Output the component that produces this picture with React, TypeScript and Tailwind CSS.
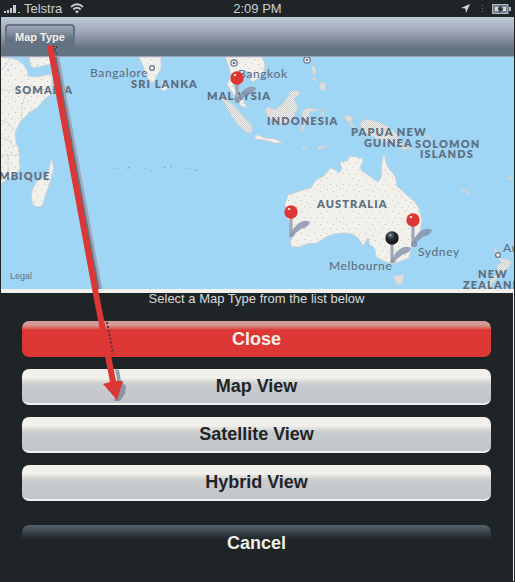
import React from "react";

const WATER = "#9fd6f5";
const LAND = "#f1f0eb";

type Label = { text: string; x: number; y: number; kind: "country" | "city" | "legal" };

const labels: Label[] = [
  { text: "SOMALIA", x: 15, y: 94, kind: "country" },
  { text: "MBIQUE", x: -1, y: 180, kind: "country" },
  { text: "SRI LANKA", x: 131, y: 88, kind: "country" },
  { text: "MALAYSIA", x: 207, y: 100, kind: "country" },
  { text: "INDONESIA", x: 267, y: 125, kind: "country" },
  { text: "PAPUA NEW", x: 351, y: 136, kind: "country" },
  { text: "GUINEA", x: 364, y: 147, kind: "country" },
  { text: "SOLOMON", x: 415, y: 148, kind: "country" },
  { text: "ISLANDS", x: 420, y: 158, kind: "country" },
  { text: "AUSTRALIA", x: 317, y: 208, kind: "country" },
  { text: "NEW", x: 478, y: 278, kind: "country" },
  { text: "ZEALAND", x: 463, y: 289, kind: "country" },
  { text: "Bangalore", x: 90, y: 77, kind: "city" },
  { text: "Bangkok", x: 238, y: 78, kind: "city" },
  { text: "Sydney", x: 418, y: 256, kind: "city" },
  { text: "Melbourne", x: 329, y: 270, kind: "city" },
  { text: "Au", x: 503, y: 252, kind: "city" },
  { text: "Legal", x: 10, y: 279, kind: "legal" },
];

const labelClass = {
  country: "fill-[#5f6f82] font-['Lato','Open_Sans',sans-serif] text-[11px] font-extrabold tracking-widest",
  city: "fill-[#5f6f82] font-['Lato','Open_Sans',sans-serif] text-[12px] font-medium tracking-wider",
  legal: "fill-[#5f6f82] font-['Liberation_Sans',Arial,sans-serif] text-[9px]",
};

const plains = [
  "M0 57L10 58L18 60L24 65L27 70L28 76L35 77L52 74L52 93L45 99L38 107L29 113L20 122L15 133L16 142L19 150L20 168L17 173L10 178L0 184Z",
  "M29 57H51V64L42 66L33 68L30 64Z",
  "M51 158L54 168L52 175L50 182L46 194L44 200L42 206L38 207L33 205L31 195L33 188L37 181L45 177L49 170Z",
  "M139 57H161V69L157 75L154 82L151 83L146 75L143 66Z",
  "M162 81L165 83L168 88L165 91L161 90Z",
  "M225 57H262L265 64L264 72L259 78L253 82L250 79L251 73L246 71L240 75L235 72L232 80L235 89L241 94L245 104L247 108L241 106L236 98L230 89L227 84L231 76L229 67Z",
  "M285 204L288 195L300 191L311 188L316 180L324 176L330 168L334 169L339 173L342 169L340 162L347 161L350 156L362 158L363 162L360 167L362 171L371 177L378 182L381 178L382 160L384 154L387 166L391 171L395 176L397 186L407 195L414 201L419 208L422 220L420 231L415 239L411 249L409 258L401 261L392 264L384 261L376 257L375 249L370 245L368 238L363 246L358 238L352 234L344 233L334 234L326 237L317 243L306 244L300 247L292 247L290 242L293 235L290 225L286 214Z",
  "M254 136L258 135L265 138L275 139L283 143L275 143L263 140L255 139Z",
];

const forests = [
  "M220 96L227 100L235 107L244 117L252 125L252 133L246 132L238 125L231 115L226 105Z",
  "M265 109L268 107L275 110L282 104L288 97L290 92L296 90L300 94L294 99L298 107L293 117L290 123L280 124L269 119Z",
  "M303 110L309 108L319 110L310 112L308 117L313 121L311 124L307 119L304 127L302 132L301 120Z",
  "M311 66L315 66L316 73L313 74ZM312 77L317 79L315 82ZM321 82L326 84L325 91L319 89Z",
  "M318 148L327 145L324 148L318 150ZM302 147L307 148L304 150ZM322 108L324 114L322 119Z",
  "M344 117L348 115L353 118L351 122L347 121L353 125L355 129L350 125ZM360 123L367 119L378 122L389 127L397 134L399 140L406 147L411 150L403 149L393 143L382 142L375 137L363 132Z",
  "M393 275L398 276L404 274L403 281L400 285L396 284Z",
  "M494 247L497 250L499 258L506 259L512 262L508 268L502 273L496 279L490 287L486 289H481L490 281L498 273L497 266L502 262L496 256Z",
  "M462 188L469 193L468 194L461 189ZM508 178L512 177L511 180ZM404 144L412 150L407 148ZM424 134L431 138L426 137Z",
];

function Pin({ x, y, dark = false }: { x: number; y: number; dark?: boolean }) {
  return (
    <g>
      <path
        d={`M${x - 1} ${y + 24}Q${x + 2} ${y + 15} ${x + 8} ${y + 11}Q${x + 14} ${y + 7} ${x + 19} ${y + 10}Q${x + 18} ${y + 15} ${x + 10} ${y + 17}Q${x + 5} ${y + 20} ${x + 2} ${y + 25}Z`}
        fill="#8490aa"
        opacity="0.8"
      />
      <path d={`M${x} ${y + 5}V${y + 25}`} stroke="#8c96a9" strokeWidth="3" />
      <path d={`M${x} ${y + 6}V${y + 21}`} stroke="#b4bac8" strokeWidth="1" />
      <circle cx={x} cy={y} r="6.7" fill={dark ? "url(#darkPin)" : "#dc3735"} />
      <ellipse cx={x - 2} cy={y - 3} rx="1.3" ry="0.9" fill={dark ? "#8da0b5" : "#ffffff"} />
    </g>
  );
}

function WorldMap() {
  return (
    <svg viewBox="1 57 513 232" className="block h-auto w-full" role="img" aria-label="Map">
      <defs>
        <radialGradient id="darkPin" cx="40%" cy="30%" r="65%">
          <stop offset="0" stopColor="#6b7c90" />
          <stop offset="0.5" stopColor="#222a30" />
          <stop offset="1" stopColor="#14181a" />
        </radialGradient>
        <pattern id="terrain" width="13" height="11" patternUnits="userSpaceOnUse">
          <path d="M2 2.5h1M8 4.5h1M5 8.5h1M11 9.5h1" stroke="#bfc4c6" />
        </pattern>
        <pattern id="forest" width="2" height="2" patternUnits="userSpaceOnUse">
          <path d="M0 0.5h1M1 1.5h1" stroke="#c9cdce" />
        </pattern>
      </defs>
      <rect x="1" y="57" width="513" height="232" fill={WATER} />
      {plains.map((d) => (
        <g key={d}>
          <path d={d} fill={LAND} stroke="#c9cfcf" strokeWidth="0.8" strokeLinejoin="round" />
          <path d={d} fill="url(#terrain)" />
        </g>
      ))}
      {forests.map((d) => (
        <g key={d}>
          <path d={d} fill={LAND} stroke="#c9cfcf" strokeWidth="0.8" strokeLinejoin="round" />
          <path d={d} fill="url(#forest)" />
        </g>
      ))}
      <path
        d="M0 88Q14 94 22 86M22 122Q20 100 28 94L46 89M0 120Q10 122 15 131M0 137L10 141L14 148M0 155H19M8 155V172M0 72L8 62"
        fill="none"
        stroke="#c9cccc"
        strokeDasharray="2 1"
      />
      <path
        d="M108 168.5h1M114 168.5h1M118 168.5h1M128 167.5h2M127 169.5h2M142 169.5h1M145 168.5h1M149 167.5h1M151 170.5h2M164 167.5h2M170 165.5h2M171 167.5h1M185 168.5h1M189 168.5h1M194 170.5h3M204 167.5h1M207 170.5h1"
        stroke="#9ea6c0"
        fill="none"
      />
      <g fill={LAND} stroke="#66758a" strokeWidth="1.2">
        <circle cx="152" cy="68" r="2.4" />
        <circle cx="234" cy="63" r="3.2" />
        <circle cx="307" cy="60" r="3.2" />
        <circle cx="414" cy="244" r="2.2" />
        <circle cx="498" cy="255" r="2.4" />
      </g>
      <g fill="#66758a">
        <circle cx="234" cy="63" r="1.3" />
        <circle cx="307" cy="60" r="1.3" />
        <circle cx="8" cy="70" r="1.2" fill={WATER} />
      </g>
      {labels.map((l) => (
        <text key={l.text} x={l.x} y={l.y} className={labelClass[l.kind]}>
          {l.text}
        </text>
      ))}
      <Pin x={237} y={78} />
      <Pin x={291} y={212} />
      <Pin x={413} y={220} />
      <Pin x={392} y={238} dark />
    </svg>
  );
}

function StatusBar() {
  return (
    <div className="grid h-[17px] grid-cols-3 items-center bg-[#1f2527] px-1 text-[13px] leading-4 text-[#cbced1]">
      <div className="flex items-center gap-1">
        <svg width="16" height="8" viewBox="0 0 16 8" fill="#cbced1" aria-hidden="true">
          <path d="M0 6h2v2H0zM3 5h2v3H3zM6 3h2v5H6zM9 0h3v8H9zM14 7h2v1h-2z" />
        </svg>
        <span>Telstra</span>
        <svg className="ml-1" width="14" height="11" viewBox="0 0 14 11" fill="none" stroke="#cbced1" strokeWidth="1.8" aria-hidden="true">
          <path d="M1 4Q7-1.5 13 4M3.3 6.5Q7 3 10.7 6.5" />
          <path d="M5 8.4Q7 6.8 9 8.4L7 10.6Z" fill="#cbced1" stroke="none" />
        </svg>
      </div>
      <span className="text-center">2:09 PM</span>
      <div className="flex items-center justify-end gap-3">
        <svg width="9" height="9" viewBox="0 0 9 9" fill="#d5d7d9" aria-hidden="true">
          <path d="M9 0L5 9L4.4 4.6L0 4Z" />
        </svg>
        <svg width="2" height="9" viewBox="0 0 2 9" fill="#66758a" aria-hidden="true">
          <path d="M0 1h1v1H0zM0 4h1v1H0zM0 7h1v1H0z" />
        </svg>
        <svg className="-ml-1" width="19" height="10" viewBox="0 0 19 10" aria-hidden="true">
          <rect x="0.5" y="0.5" width="15.5" height="9" fill="#778396" stroke="#aeb4bd" />
          <path d="M17 3h2v4h-2z" fill="#aeb4bd" />
          <path d="M3 3h3v4H3zM11 3h3v4h-3z" fill="#d5d7d9" />
          <path d="M9.5 1L5.5 5.5H8L7 9L11.5 4.5H9Z" fill="#1f2527" />
        </svg>
      </div>
    </div>
  );
}

const mapOptions = ["Map View", "Satellite View", "Hybrid View"];

export default function App() {
  return (
    <main className="relative min-h-screen bg-[#1f2527] font-['Liberation_Sans',Arial,sans-serif]">
      <StatusBar />
      <div className="px-px">
        <header className="flex h-10 items-end border-b border-[#9ea4b8] bg-linear-to-b from-[#bccbd4] via-[#9ea4b8] via-40% to-[#647384] to-80% pl-1">
          <button
            type="button"
            className="h-8 rounded-t-[4px] border-2 border-b-0 border-[#647384] bg-linear-to-b from-[#a0a6b8] to-[#647384] to-45% px-2 pb-2 text-[11px] leading-4 font-bold text-[#f1f0eb]"
          >
            Map Type
          </button>
        </header>
        <WorldMap />
        <div className="h-1 bg-[#f1f0eb]" />
      </div>

      <section aria-label="Map type" className="mr-px border-r border-[#f1f0eb] px-[22px] pb-5">
        <p className="pb-4 text-center text-[13px] leading-3 text-[#d8dadb]">
          Select a Map Type from the list below
        </p>
        <div className="flex flex-col gap-3 text-[18px] leading-5 font-bold">
          <button
            type="button"
            className="h-9 rounded-[7px] bg-linear-to-b from-[#d39b9a] from-10% to-[#dc3735] to-25% pb-px text-[#f1f0eb]"
          >
            Close
          </button>
          {mapOptions.map((name) => (
            <button
              key={name}
              type="button"
              className="h-9 rounded-[7px] border-b-2 border-[#f1f0eb] bg-linear-to-b from-[#f1f0eb] from-25% via-[#c9cccd] via-45% to-[#c2c5cb] text-[#1f2527]"
            >
              {name}
            </button>
          ))}
          <button
            type="button"
            className="mt-3 h-9 rounded-[7px] bg-linear-to-b from-[#56636f] to-[#1f2527] to-40% text-[#f1f0eb]"
          >
            Cancel
          </button>
        </div>
      </section>

      <svg className="pointer-events-none absolute top-0 left-0" width="140" height="410" viewBox="0 0 140 410" aria-hidden="true">
        <path d="M55 57L99 289" stroke="#647384" strokeWidth="5" />
        <path d="M58 57L101 289" stroke="#9ea4b8" strokeWidth="2.5" />
        <path d="M115 369L119 370L121 381L126 386L125 394L120 401L114 401L118 384Z" fill="#7a879b" opacity="0.8" />
        <path d="M53 46L57 47L54 50L57 54" stroke="#1f2527" fill="none" strokeDasharray="2 1" />
        <path d="M107 322L113 354" stroke="#5d3334" strokeWidth="2" strokeDasharray="2 2" />
        <path d="M47 46L53 45L98 289L116 381L123 381L117 400L103 384L110 382L92 289Z" fill="#dc3735" />
      </svg>
    </main>
  );
}
